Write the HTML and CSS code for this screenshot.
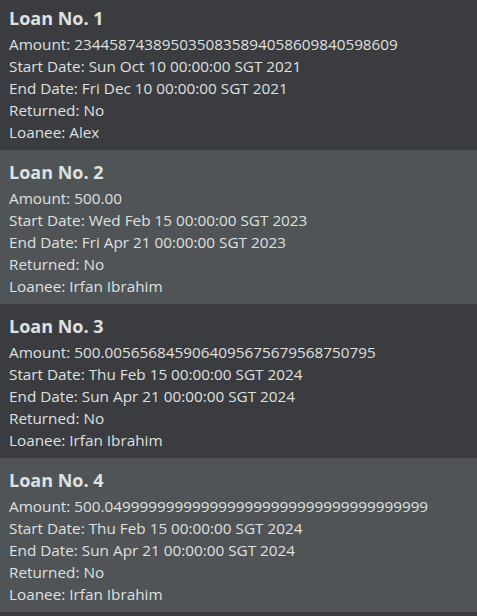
FILE: index.html
```html
<!DOCTYPE html>
<html>
<head>
<meta charset="utf-8">
<link rel="stylesheet" href="styles.css">
</head>
<body>
<div class="list">
  <div class="card dark first">
    <div class="title">Loan No. 1</div>
    <div class="line">Amount: 2344587438950350835894058609840598609</div>
    <div class="line">Start Date: Sun Oct 10 00:00:00 SGT 2021</div>
    <div class="line">End Date: Fri Dec 10 00:00:00 SGT 2021</div>
    <div class="line">Returned: No</div>
    <div class="line">Loanee: Alex</div>
  </div>
  <div class="card light">
    <div class="title">Loan No. 2</div>
    <div class="line">Amount: 500.00</div>
    <div class="line">Start Date: Wed Feb 15 00:00:00 SGT 2023</div>
    <div class="line">End Date: Fri Apr 21 00:00:00 SGT 2023</div>
    <div class="line">Returned: No</div>
    <div class="line">Loanee: Irfan Ibrahim</div>
  </div>
  <div class="card dark">
    <div class="title">Loan No. 3</div>
    <div class="line">Amount: 500.0056568459064095675679568750795</div>
    <div class="line">Start Date: Thu Feb 15 00:00:00 SGT 2024</div>
    <div class="line">End Date: Sun Apr 21 00:00:00 SGT 2024</div>
    <div class="line">Returned: No</div>
    <div class="line">Loanee: Irfan Ibrahim</div>
  </div>
  <div class="card light">
    <div class="title">Loan No. 4</div>
    <div class="line">Amount: 500.0499999999999999999999999999999999999</div>
    <div class="line">Start Date: Thu Feb 15 00:00:00 SGT 2024</div>
    <div class="line">End Date: Sun Apr 21 00:00:00 SGT 2024</div>
    <div class="line">Returned: No</div>
    <div class="line">Loanee: Irfan Ibrahim</div>
  </div>
</div>
</body>
</html>
```
FILE: styles.css
```css
html, body {
  margin: 0;
  padding: 0;
  background: #3b3c3f;
  height: 100%;
  overflow: hidden;
}
.list {
  display: flex;
  flex-direction: column;
  font-family: "Open Sans", "Noto Sans", sans-serif;
  color: #dfe0e0;
}
.card {
  height: 154px;
  box-sizing: border-box;
  padding: 8px 9px 0 9px;
}
.card.first {
  height: 150px;
  padding-top: 4px;
}
.dark { background: #3b3c3f; }
.light { background: #505456; }
.title {
  font-size: 18px;
  font-weight: 700;
  line-height: 28px;
  margin-bottom: 1px;
}
.line {
  font-size: 15.3px;
  line-height: 22px;
}
```
